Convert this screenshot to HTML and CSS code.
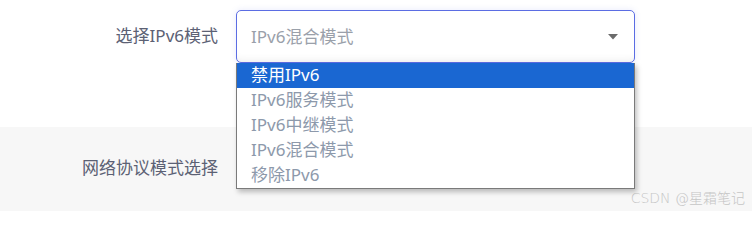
FILE: index.html
```html
<!DOCTYPE html>
<html lang="zh-CN">
<head>
<meta charset="utf-8">
<title>IPv6</title>
<link rel="stylesheet" href="styles.css">
</head>
<body>
<div class="page">
  <div class="row row-top">
    <label class="label">选择IPv6模式</label>
    <div class="select-wrap">
      <div class="select">
        <span class="value">IPv6混合模式</span>
        <svg class="arrow" width="10" height="6" viewBox="0 0 10 6"><path d="M0 0H10L5 5.5Z" fill="#6b6b6b"/></svg>
      </div>
      <ul class="menu">
        <li class="opt active">禁用IPv6</li>
        <li class="opt">IPv6服务模式</li>
        <li class="opt">IPv6中继模式</li>
        <li class="opt">IPv6混合模式</li>
        <li class="opt">移除IPv6</li>
      </ul>
    </div>
  </div>
  <div class="row row-gray">
    <label class="label">网络协议模式选择</label>
  </div>
  <div class="watermark">CSDN @星霜笔记</div>
</div>
</body>
</html>
```

FILE: styles.css
```css
* { box-sizing: border-box; }
html, body { margin: 0; padding: 0; }
body {
  width: 752px;
  height: 211px;
  overflow: hidden;
  background: #fff;
  font-family: "Noto Sans", "Noto Sans CJK SC", sans-serif;
}
.page { position: relative; height: 211px; }
.row { display: flex; }
.row-top {
  height: 127px;
  padding-top: 10px;
  align-items: flex-start;
  background: #fff;
}
.label {
  width: 218px;
  margin-right: 18px;
  text-align: right;
  font-size: 17px;
  color: #5c6174;
  line-height: 51px;
}
.row-gray {
  height: 84px;
  align-items: center;
  background: #f7f7f7;
}
.row-gray .label { line-height: 24px; padding-bottom: 2px; }
.select-wrap { position: relative; width: 399px; z-index: 2; }
.select {
  height: 53px;
  border: 1px solid #5b6de3;
  border-radius: 5px;
  display: flex;
  align-items: center;
  padding: 0 16px 0 14px;
  background: #fff;
  box-shadow: 0 0 6px rgba(91,109,227,0.15), inset 0 -9px 8px -8px rgba(0,0,0,0.08);
}
.value { flex: 1; font-size: 17px; color: #9aa0aa; padding-bottom: 2px; }
.arrow { display: block; }
.menu {
  position: absolute;
  top: 53px;
  left: 0;
  width: 399px;
  margin: 0;
  padding: 0;
  list-style: none;
  background: #fff;
  border: 1px solid #7a7a7a;
  border-top: none;
  box-shadow: 2px 3px 5px rgba(0,0,0,0.25);
}
.opt {
  height: 25px;
  line-height: 24px;
  padding-left: 14px;
  font-size: 17px;
  color: #8d99ab;
}
.opt.active { background: #1a67d2; color: #fff; }
.watermark {
  position: absolute;
  right: 7px;
  bottom: 4px;
  font-size: 14px;
  color: #c6c6c6;
  font-family: "DejaVu Sans", "Noto Sans CJK SC", sans-serif;
  font-weight: 300;
}
```
